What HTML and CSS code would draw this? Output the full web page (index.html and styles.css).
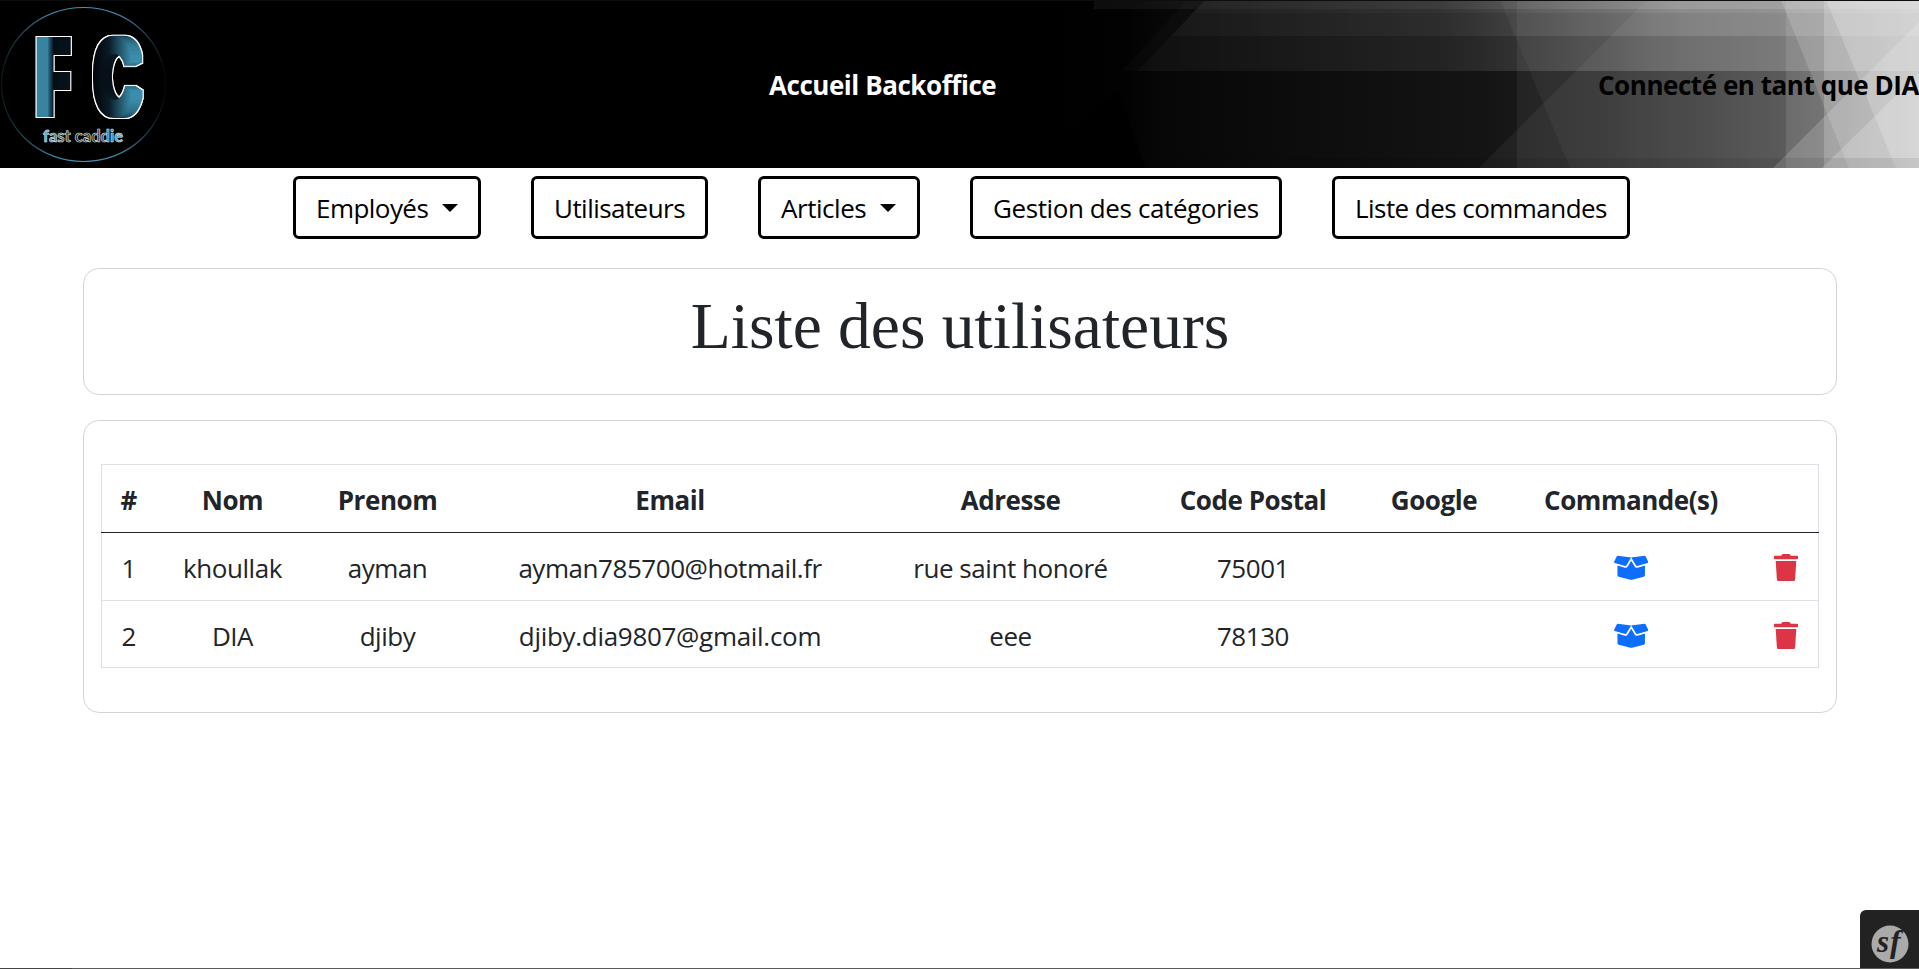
FILE: index.html
```html
<!DOCTYPE html>
<html lang="fr">
<head>
<meta charset="utf-8">
<title>Liste des utilisateurs</title>
<link rel="stylesheet" href="styles.css">
</head>
<body>
<svg width="0" height="0" class="sprites">
  <symbol id="box" viewBox="0 0 640 512"><path d="M425.7 256c-16.9 0-32.8-9-41.4-23.4L320 126l-64.2 106.6c-8.7 14.5-24.6 23.5-41.5 23.5-4.5 0-9-.6-13.3-1.9L64 215v178c0 14.7 10 27.5 24.2 31l216.2 54.1c10.2 2.5 20.9 2.5 31 0L551.8 424c14.2-3.6 24.2-16.4 24.2-31V215l-137 39.1c-4.3 1.3-8.8 1.9-13.3 1.9zm212.6-112.2L586.8 41c-3.1-6.2-9.8-9.8-16.7-8.9L320 64l91.7 152.1c3.8 6.3 11.4 9.3 18.5 7.3l197.9-56.5c9.9-2.9 14.7-13.9 10.2-23.1zM53.2 41L1.7 143.8c-4.6 9.2.3 20.2 10.1 23l197.9 56.5c7.1 2 14.7-1 18.5-7.3L320 64 69.8 32.1c-6.9-.8-13.5 2.7-16.6 8.9z"/></symbol>
  <symbol id="trash" viewBox="0 0 448 512"><path d="M432 32H312l-9.4-18.7A24 24 0 0 0 281.1 0H166.8a23.72 23.72 0 0 0-21.4 13.3L136 32H16A16 16 0 0 0 0 48v32a16 16 0 0 0 16 16h416a16 16 0 0 0 16-16V48a16 16 0 0 0-16-16zM53.2 467a48 48 0 0 0 47.9 45h245.8a48 48 0 0 0 47.9-45L416 128H32z"/></symbol>
</svg>
<header class="banner">
  <svg class="banner-art" viewBox="0 0 1919 168" preserveAspectRatio="none">
    <defs>
      <linearGradient id="base" gradientUnits="userSpaceOnUse" x1="1040" y1="0" x2="1919" y2="0">
        <stop offset="0" stop-color="#000"/><stop offset=".1" stop-color="#020202"/><stop offset=".14" stop-color="#070707"/><stop offset=".5" stop-color="#141414"/><stop offset=".64" stop-color="#202020"/><stop offset=".84" stop-color="#404040"/><stop offset=".9" stop-color="#505050"/><stop offset="1" stop-color="#747474"/>
      </linearGradient>
      <linearGradient id="lift" gradientUnits="userSpaceOnUse" x1="1120" y1="0" x2="1919" y2="0">
        <stop offset="0" stop-color="#fff" stop-opacity=".13"/><stop offset=".4" stop-color="#fff" stop-opacity=".25"/><stop offset=".7" stop-color="#fff" stop-opacity=".72"/><stop offset="1" stop-color="#fff" stop-opacity=".65"/>
      </linearGradient>
    </defs>
    <rect width="1919" height="168"/>
    <path fill="url(#base)" d="M1040 0H1919V168H1145L1118 90L1040 158z"/>
    <path fill="#fff" opacity=".05" d="M1094 0H1205L1196 9H1094zM1114 0H1205L1196 9H1114z"/>
    <path fill="#fff" opacity=".02" d="M1187 0H1205L1138 71H1122z"/>
    <g fill="url(#lift)">
      <path opacity=".28" d="M1205 0H1919V71H1138z"/>
      <path opacity=".18" d="M1205 0H1919V36H1171z"/>
      <path opacity=".12" d="M1205 0H1919V13H1193z"/>
      <path opacity=".18" d="M1205 0H1919V9H1197z"/>
    </g>
    <g fill="#fff">
      <path opacity=".045" d="M1500 0H1919V168H1570z"/>
      <path opacity=".055" d="M1517 0H1919V168H1517z"/>
      <path opacity=".05" d="M1647 0H1919V168H1479z"/>
      <path opacity=".15" d="M1781 0H1919V168H1849z"/>
      <path opacity=".10" d="M1786 0H1919V168H1786z"/>
      <path opacity=".2" d="M1824 0H1919V168H1824z"/>
      <path opacity=".2" d="M1826 0H1919V168H1896z"/>
      <path opacity=".17" d="M1919 22V168H1773z"/>
      <path opacity=".2" d="M1919 73V168H1822z"/>
    </g>
    <path opacity=".08" d="M1040 158H1919V168H1040z"/>
    <path fill="#0d0d0d" d="M0 0H1919V1H0z"/>
  </svg>
  <svg class="logo" viewBox="0 0 168 168" width="168" height="168">
    <defs>
      <linearGradient id="gf" gradientUnits="userSpaceOnUse" x1="42" x2="66" y1="0" y2="0"><stop offset="0" stop-color="#3e8fac"/><stop offset=".08" stop-color="#24607a"/><stop offset=".3" stop-color="#02060c"/><stop offset="1" stop-color="#07121b"/></linearGradient>
      <linearGradient id="gc" gradientUnits="userSpaceOnUse" x1="99" x2="141" y1="0" y2="0"><stop offset="0" stop-color="#03050b"/><stop offset=".35" stop-color="#0a1a25"/><stop offset="1" stop-color="#43a3c6"/></linearGradient>
      <linearGradient id="ring" x1="0" x2="1" y1="0" y2="0"><stop offset="0" stop-color="#0c1a20"/><stop offset=".3" stop-color="#3a7f98"/><stop offset=".5" stop-color="#4798b6"/><stop offset=".75" stop-color="#3a7f98"/><stop offset="1" stop-color="#04090c"/></linearGradient>
      <linearGradient id="tag" gradientUnits="userSpaceOnUse" x1="43" x2="123" y1="0" y2="0"><stop offset="0" stop-color="#4fb0d4"/><stop offset=".4" stop-color="#0b151b"/><stop offset=".6" stop-color="#0b151b"/><stop offset="1" stop-color="#4fb0d4"/></linearGradient>
      <filter id="heavy" filterUnits="userSpaceOnUse" x="0" y="0" width="168" height="168" color-interpolation-filters="sRGB">
        <feMorphology in="SourceGraphic" operator="dilate" radius="5 3" result="body"/>
        <feMorphology in="body" operator="dilate" radius="1" result="grown"/>
        <feFlood flood-color="#fff"/>
        <feComposite in2="grown" operator="in" result="rim"/>
        <feMerge><feMergeNode in="rim"/><feMergeNode in="rim"/><feMergeNode in="body"/></feMerge>
      </filter>
    </defs>
    <ellipse cx="83.5" cy="84.5" rx="82" ry="77" fill="none" stroke="url(#ring)" stroke-width="1.2"/>
    <g class="mono">
      <text fill="url(#gf)" x="38.500" y="114" textLength="29" lengthAdjust="spacingAndGlyphs">F</text>
      <text fill="url(#gc)" x="95.500" y="114" textLength="44" lengthAdjust="spacingAndGlyphs">C</text>
    </g>
    <text class="tagline" x="43" y="141.500" textLength="80" lengthAdjust="spacingAndGlyphs">fast caddie</text>
  </svg>
  <a class="home">Accueil Backoffice</a>
  <span class="account">Connecté en tant que DIA</span>
</header>
<nav class="menu">
  <a class="item w1"><span>Employés</span><i class="caret"></i></a>
  <a class="item w2"><span>Utilisateurs</span></a>
  <a class="item w3"><span>Articles</span><i class="caret"></i></a>
  <a class="item w4"><span>Gestion des catégories</span></a>
  <a class="item w5"><span>Liste des commandes</span></a>
</nav>
<section class="card heading"><h1>Liste des utilisateurs</h1></section>
<section class="card list">
  <table>
    <colgroup><col class="c1"><col class="c2"><col class="c3"><col class="c4"><col class="c5"><col class="c6"><col class="c7"><col class="c8"><col class="c9"></colgroup>
    <thead><tr><th>#</th><th>Nom</th><th>Prenom</th><th>Email</th><th>Adresse</th><th>Code Postal</th><th>Google</th><th>Commande(s)</th><th></th></tr></thead>
    <tbody>
      <tr><td>1</td><td>khoullak</td><td>ayman</td><td>ayman785700@hotmail.fr</td><td>rue saint honoré</td><td>75001</td><td></td><td><svg class="box"><use href="#box"/></svg></td><td><svg class="trash"><use href="#trash"/></svg></td></tr>
      <tr><td>2</td><td>DIA</td><td>djiby</td><td class="wide">djiby.dia9807@gmail.com</td><td>eee</td><td>78130</td><td></td><td><svg class="box"><use href="#box"/></svg></td><td><svg class="trash"><use href="#trash"/></svg></td></tr>
    </tbody>
  </table>
</section>
<div class="toolbar"><svg width="59" height="59" viewBox="0 0 59 59"><circle cx="30" cy="34" r="18.5" fill="#aaa"/><text class="sf" x="17" y="42">s</text><text class="sf tall" x="30" y="42">f</text></svg></div>
<div class="edge-line"></div>
</body>
</html>
```
FILE: styles.css
```css
* { box-sizing: border-box; }
html, body { margin: 0; height: 969px; overflow: hidden; }
body { background: #fff; color: #212529; font: 26px/40px "Open Sans", "Noto Sans", sans-serif; position: relative; }
.sprites { position: absolute; }
.banner { position: relative; height: 168px; background: #000; display: flex; align-items: center; overflow: hidden; white-space: nowrap; font-weight: 700; }
.banner-art { position: absolute; inset: 0; width: 100%; height: 168px; }
.logo { position: relative; flex: none; }
.home, .account { position: relative; flex: none; padding-top: 2px; letter-spacing: -.45px; }
.home { color: #fff; width: 228px; margin-left: 601px; }
.account { color: #000; margin-left: 601px; }
.mono { font: 700 107px "Liberation Sans", sans-serif; filter: url(#heavy); }
.tagline { font: 700 17px Lato, sans-serif; fill: url(#tag); stroke: #cfe2ea; stroke-width: .7px; }
.menu { display: flex; gap: 50px; padding: 8px 0 0 293px; height: 100px; white-space: nowrap; color: #000; }
.item { height: 63px; border: 3px solid #000; border-radius: 6px; display: flex; align-items: center; padding: 0 0 0 20px; letter-spacing: -.55px; }
.w1 { width: 188px; } .w2 { width: 177px; } .w3 { width: 162px; letter-spacing: -.45px; } .w4 { width: 312px; letter-spacing: -.4px; } .w5 { width: 298px; }
.caret { border: 8px solid transparent; border-top-color: #000; border-bottom: 0; margin: 0 0 0 14px; }
.card { margin: 0 82px 0 83px; border: 1px solid #d3d4d5; border-radius: 16px; }
.heading { height: 127px; text-align: center; }
h1 { margin: 19px 0 0; font: 400 65.500px/77px "Liberation Serif", serif; }
.list { margin-top: 25px; height: 293px; padding: 43px 17px; }
table { width: 1717px; table-layout: fixed; border-collapse: collapse; border: 1px solid #dee2e6; text-align: center; white-space: nowrap; }
th, td { height: 68px; padding: 2px 0 0 1px; letter-spacing: -.45px; }
tbody tr:last-child td { height: 67px; padding-top: 3px; }
thead tr { border-bottom: 1px solid #212529; }
tbody tr { border-top: 1px solid #dee2e6; }
tbody tr:first-child { border-top: 1px solid #212529; }
td.wide { letter-spacing: -.3px; }
.c1 { width: 53px; } .c2 { width: 155px; } .c3 { width: 155px; } .c4 { width: 410px; } .c5 { width: 271px; } .c6 { width: 214px; } .c7 { width: 148px; } .c8 { width: 246px; } .c9 { width: 65px; }
td svg { display: block; margin: 0 auto; height: 27.5px; }
.box { width: 34.4px; fill: #0d6efd; }
.trash { width: 24px; fill: #dc3545; }
.toolbar { position: absolute; right: 0; bottom: 0; width: 59px; height: 59px; background: #222; border-radius: 6px 0 0; }
.toolbar svg { display: block; }
.sf { font: italic 700 31px "Liberation Serif", serif; fill: #222; }
.tall { font-size: 32px; }
.edge-line { position: absolute; left: 0; right: 0; bottom: 0; height: 1px; background: linear-gradient(90deg, #444 72px, #5a5a5a 72px); }
```
